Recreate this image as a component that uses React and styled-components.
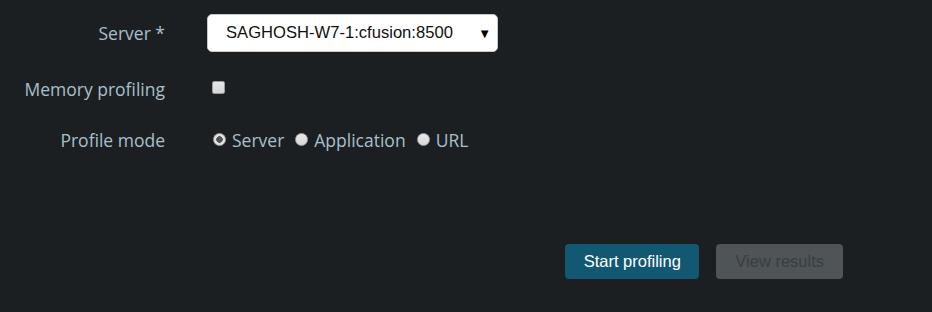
import React from 'react';
import styled, { createGlobalStyle } from 'styled-components';

const GlobalStyle = createGlobalStyle`
  html, body {
    margin: 0;
    padding: 0;
    background: #1c1f22;
  }
  body {
    width: 932px;
    height: 312px;
    overflow: hidden;
  }
`;

const Page = styled.div`
  display: flex;
  flex-direction: column;
  height: 312px;
  padding-top: 14px;
  box-sizing: border-box;
  font-family: 'Open Sans', 'Liberation Sans', sans-serif;
`;

const Row = styled.div`
  display: grid;
  grid-template-columns: 165px 1fr;
  column-gap: 43px;
  align-items: center;
  height: 38px;
  margin-bottom: ${(p) => p.gap || 0}px;
`;

const Label = styled.label`
  text-align: right;
  font-size: 17.5px;
  color: #a8bfcb;
  white-space: nowrap;
`;

const Controls = styled.div`
  display: flex;
  align-items: center;
`;

const SelectBox = styled.div`
  display: flex;
  align-items: center;
  justify-content: space-between;
  width: 291px;
  height: 38px;
  box-sizing: border-box;
  padding: 0 6px 0 18px;
  margin-left: -1px;
  background: #ffffff;
  border: 1px solid #c8c8c8;
  border-radius: 5px;
  font-family: 'Liberation Sans', Arial, sans-serif;
  font-size: 16.6px;
  color: #111;
`;

const Arrow = styled.span`
  font-size: 13px;
  color: #000;
`;

const Check = styled.input.attrs({ type: 'checkbox' })`
  appearance: none;
  width: 13px;
  height: 13px;
  margin: 0 0 ${(p) => p.lift || 0}px 4px;
  box-sizing: border-box;
  background: linear-gradient(#e6e6e6, #d6d6d6);
  border: 1px solid #9a9a9a;
  border-radius: 2px;
`;

const RadioLabel = styled.label`
  display: flex;
  align-items: center;
  margin-right: 6px;
  font-size: 17.5px;
  color: #a8bfcb;
`;

const Radio = styled.input.attrs({ type: 'radio' })`
  appearance: none;
  width: 13px;
  height: 13px;
  margin: 0 6px 2px 5px;
  box-sizing: border-box;
  border-radius: 50%;
  border: 1px solid #a6a6a6;
  background: ${(p) =>
    p.checked
      ? 'radial-gradient(circle, #555 0 3px, #e2e2e2 3.5px)'
      : 'linear-gradient(#e8e8e8, #d8d8d8)'};
`;

const Actions = styled.div`
  display: flex;
  justify-content: flex-end;
  gap: 17px;
  margin-top: 85px;
  padding-right: 89px;
`;

const Button = styled.button`
  height: 35px;
  padding: 0 ${(p) => (p.disabled ? 19 : 18.5)}px;
  border: none;
  border-radius: 4px;
  font-family: 'Liberation Sans', Arial, sans-serif;
  font-size: 16.5px;
  background: ${(p) => (p.disabled ? '#4f5457' : '#135873')};
  color: ${(p) => (p.disabled ? '#393e41' : '#ffffff')};
`;

export default function App() {
  return (
    <>
      <GlobalStyle />
      <Page>
        <Row gap={18}>
          <Label>Server *</Label>
          <Controls>
            <SelectBox>
              <span>SAGHOSH-W7-1:cfusion:8500</span>
              <Arrow>▼</Arrow>
            </SelectBox>
          </Controls>
        </Row>
        <Row gap={13}>
          <Label>Memory profiling</Label>
          <Controls>
            <Check lift={4} readOnly />
          </Controls>
        </Row>
        <Row>
          <Label>Profile mode</Label>
          <Controls>
            <RadioLabel>
              <Radio name="mode" checked readOnly />
              Server
            </RadioLabel>
            <RadioLabel>
              <Radio name="mode" readOnly />
              Application
            </RadioLabel>
            <RadioLabel>
              <Radio name="mode" readOnly />
              URL
            </RadioLabel>
          </Controls>
        </Row>
        <Actions>
          <Button>Start profiling</Button>
          <Button disabled>View results</Button>
        </Actions>
      </Page>
    </>
  );
}
